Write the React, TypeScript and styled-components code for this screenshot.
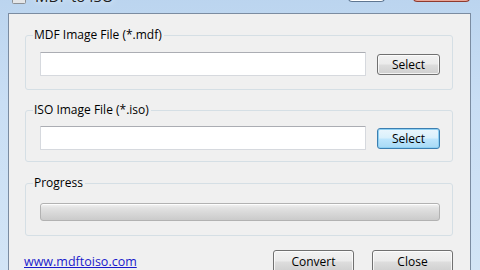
import styled, { createGlobalStyle, css } from 'styled-components';

const GlobalStyle = createGlobalStyle`
  html, body {
    margin: 0;
    padding: 0;
    overflow: hidden;
    background: #c6dcf2;
  }
`;

const Window = styled.div`
  width: 480px;
  height: 300px;
  margin-top: -18px;
  display: flex;
  flex-direction: column;
  background: linear-gradient(to bottom, #b9d3ee 0%, #c9def4 40%, #d3e5f6 100%);
  font-family: 'Open Sans', 'Liberation Sans', sans-serif;
  font-size: 12px;
  color: #000;
`;

const TitleBar = styled.div`
  height: 31px;
  flex-shrink: 0;
  display: flex;
  align-items: flex-start;
  padding: 0 10px 0 12px;
  box-sizing: border-box;
`;

const TitleIcon = styled.svg`
  width: 14px;
  height: 14px;
  margin-top: 8px;
  flex-shrink: 0;
`;

const TitleText = styled.div`
  margin: 4px 0 0 9px;
  font-size: 15px;
  line-height: 20px;
  color: #1e1e1e;
  text-shadow: 0 0 6px #ffffff;
  flex: 1;
`;

const Captions = styled.div`
  display: flex;
  align-items: flex-start;
`;

const CaptionButton = styled.div<{ $close?: boolean; $w: number }>`
  width: ${({ $w }) => $w}px;
  height: 20px;
  box-sizing: border-box;
  border: 1px solid #5f7691;
  border-top: none;
  border-radius: 0 0 4px 4px;
  ${({ $close }) =>
    $close
      ? css`
          background: linear-gradient(to bottom, #e8a092, #c9503e);
          border-color: #8f3a2e;
          box-shadow: inset 0 -1px 0 #e9a597;
        `
      : css`
          background: linear-gradient(to bottom, #e6eef7, #d4e2f1);
          box-shadow: inset 0 -1px 0 #ffffff;
        `}
`;

const CaptionGap = styled.div`
  width: 28px;
`;

const Client = styled.div`
  flex: 1;
  margin: 0 9px 0 8px;
  border: 1px solid #7b8ca1;
  border-bottom: none;
  background: #f0f0f0;
  padding: 14px 17px 0 16px;
  display: flex;
  flex-direction: column;
  overflow: hidden;
`;

const Group = styled.fieldset<{ $top: number; $bottom: number; $gap: number }>`
  flex-shrink: 0;
  margin: 0 0 ${({ $gap }) => $gap}px 0;
  padding: ${({ $top, $bottom }) => `${$top}px 0 ${$bottom}px 0`};
  border: 1px solid #d5dfe5;
  border-radius: 3px;
  min-inline-size: 0;
`;

const Legend = styled.legend`
  margin-left: 7px;
  padding: 0 2px 0 1px;
  line-height: 14px;
  color: #000;
`;

const FieldRow = styled.div`
  display: flex;
  align-items: center;
  gap: 11px;
  padding: 0 12px 0 14px;
`;

const TextBox = styled.input`
  flex: 1;
  min-width: 0;
  height: 24px;
  box-sizing: border-box;
  border: 1px solid #d6d9de;
  border-top-color: #abadb3;
  background: #fff;
  border-radius: 1px;
  outline: none;
  padding: 0 3px;
  font: inherit;
`;

const Button = styled.button<{ $focused?: boolean; $w: number; $h: number }>`
  width: ${({ $w }) => $w}px;
  height: ${({ $h }) => $h}px;
  box-sizing: border-box;
  border: 1px solid #707070;
  border-radius: 3px;
  padding: 0;
  font-family: 'Open Sans', 'Liberation Sans', sans-serif;
  font-size: 12px;
  color: #000;
  background: linear-gradient(to bottom, #f2f2f2 0%, #ebebeb 48%, #dddddd 52%, #cfcfcf 100%);
  box-shadow: inset 0 0 0 1px rgba(255, 255, 255, 0.75);
  flex-shrink: 0;
  ${({ $focused }) =>
    $focused &&
    css`
      border-color: #3c7fb1;
      background: linear-gradient(to bottom, #eaf6fd 0%, #d9f0fc 48%, #bee6fd 52%, #a7d9f5 100%);
      box-shadow: inset 0 0 0 1px #8ed0f3;
    `}
`;

const ProgressTrack = styled.div`
  height: 18px;
  box-sizing: border-box;
  border: 1px solid #b2b2b2;
  border-radius: 3px;
  background: linear-gradient(to bottom, #f3f3f3 0%, #e2e2e2 25%, #d7d7d7 60%, #cbcbcb 100%);
  box-shadow: inset 0 1px 0 #fdfdfd;
  margin: 0 12px 0 14px;
`;

const Footer = styled.div`
  flex-shrink: 0;
  display: flex;
  align-items: flex-start;
  gap: 18px;
`;

const SiteLink = styled.a`
  flex: 1;
  margin: 3px 0 0 -1px;
  color: #1a1acc;
  text-decoration: underline;
  font-size: 12.5px;
`;

const App = () => {
  return (
    <>
      <GlobalStyle />
      <Window>
        <TitleBar>
          <TitleIcon viewBox="0 0 14 14">
            <rect x="0.5" y="0.5" width="13" height="13" rx="1" fill="#e4e6e8" stroke="#8c9095" />
            <rect x="3" y="3" width="8" height="5" fill="#b6bcc3" />
          </TitleIcon>
          <TitleText>MDF to ISO</TitleText>
          <Captions>
            <CaptionButton $w={37} />
            <CaptionGap />
            <CaptionButton $close $w={57} />
          </Captions>
        </TitleBar>
        <Client>
          <Group $top={10} $bottom={13} $gap={13}>
            <Legend>MDF Image File (*.mdf)</Legend>
            <FieldRow>
              <TextBox />
              <Button $w={63} $h={21}>
                Select
              </Button>
            </FieldRow>
          </Group>
          <Group $top={9} $bottom={11} $gap={14}>
            <Legend>ISO Image File (*.iso)</Legend>
            <FieldRow>
              <TextBox />
              <Button $focused $w={63} $h={21}>
                Select
              </Button>
            </FieldRow>
          </Group>
          <Group $top={13} $bottom={14} $gap={14}>
            <Legend>Progress</Legend>
            <ProgressTrack />
          </Group>
          <Footer>
            <SiteLink href="#">www.mdftoiso.com</SiteLink>
            <Button $w={81} $h={23}>
              Convert
            </Button>
            <Button $w={81} $h={23}>
              Close
            </Button>
          </Footer>
        </Client>
      </Window>
    </>
  );
};

export default App;
